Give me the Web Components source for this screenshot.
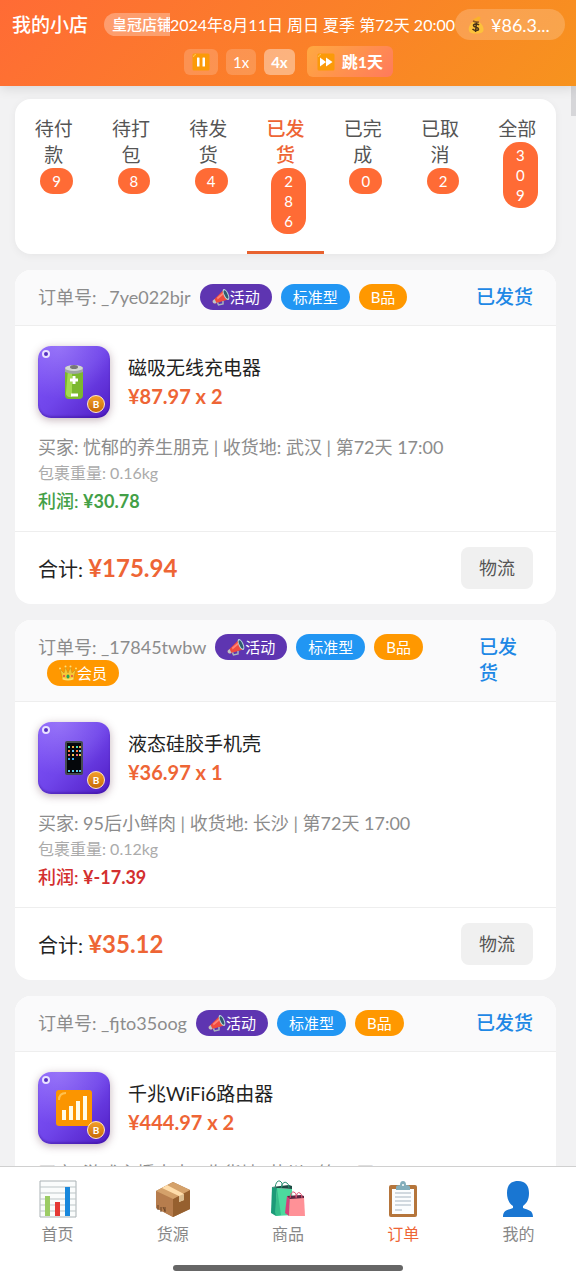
<!DOCTYPE html>
<html lang="zh-CN">
<head>
<meta charset="utf-8">
<meta name="viewport" content="width=device-width, initial-scale=1">
<title>我的小店 - 订单</title>
<style>
  :root {
    --brand: #ff6b35;
    --brand-end: #f7931e;
    --page: #f2f2f3;
    --card: #ffffff;
    --card-head: #fafafb;
    --line: #eeeeee;
    --ink: #222222;
    --muted: #8c8c8c;
    --faint: #ababab;
    --price: #ee6535;
    --blue: #2196f3;
    --purple: #5e35b1;
    --orange: #ff9800;
    --status: #1e88e5;
    --profit: #43a047;
    --loss: #d32f2f;
  }

  body {
    margin: 0;
    background: var(--page);
    color: var(--ink);
    font-family: Lato, "Noto Sans CJK SC", sans-serif;
    font-size: 18px;
    line-height: 26px;
  }
</style>
</head>
<body>
<shop-app>
  <shop-header slot="header" shop="我的小店" level="皇冠店铺" date="2024年8月11日 周日 夏季 第72天 20:00" money="¥86.3..."></shop-header>

  <order-tabs>
    <order-tab count="9">待付款</order-tab>
    <order-tab count="8">待打包</order-tab>
    <order-tab count="4">待发货</order-tab>
    <order-tab count="286" active>已发货</order-tab>
    <order-tab count="0">已完成</order-tab>
    <order-tab count="2">已取消</order-tab>
    <order-tab count="309">全部</order-tab>
  </order-tabs>

  <order-card number="_7ye022bjr" status="已发货" product="磁吸无线充电器" icon="battery" price="¥87.97 x 2"
    buyer="买家: 忧郁的养生朋克 | 收货地: 武汉 | 第72天 17:00" weight="包裹重量: 0.16kg" profit="¥30.78" total="¥175.94">
    <order-tag slot="tags" kind="event"><emoji-icon name="megaphone"></emoji-icon>活动</order-tag>
    <order-tag slot="tags">标准型</order-tag>
    <order-tag slot="tags" kind="grade">B品</order-tag>
  </order-card>

  <order-card number="_17845twbw" status="已发货" product="液态硅胶手机壳" icon="phone" price="¥36.97 x 1"
    buyer="买家: 95后小鲜肉 | 收货地: 长沙 | 第72天 17:00" weight="包裹重量: 0.12kg" profit="¥-17.39" total="¥35.12">
    <order-tag slot="tags" kind="event"><emoji-icon name="megaphone"></emoji-icon>活动</order-tag>
    <order-tag slot="tags">标准型</order-tag>
    <order-tag slot="tags" kind="grade">B品</order-tag>
    <order-tag slot="tags" kind="grade"><emoji-icon name="crown"></emoji-icon>会员</order-tag>
  </order-card>

  <order-card number="_fjto35oog" status="已发货" product="千兆WiFi6路由器" icon="signal" price="¥444.97 x 2"
    buyer="买家: 游戏主播大大 | 收货地: 苏州 | 第72天 17:00" weight="包裹重量: 0.45kg" profit="¥120.50" total="¥889.94">
    <order-tag slot="tags" kind="event"><emoji-icon name="megaphone"></emoji-icon>活动</order-tag>
    <order-tag slot="tags">标准型</order-tag>
    <order-tag slot="tags" kind="grade">B品</order-tag>
  </order-card>

  <shop-nav slot="nav">
    <nav-item icon="chart" href="#home">首页</nav-item>
    <nav-item icon="package" href="#supply">货源</nav-item>
    <nav-item icon="bags" href="#goods">商品</nav-item>
    <nav-item icon="clipboard" href="#orders" active>订单</nav-item>
    <nav-item icon="user" href="#me">我的</nav-item>
  </shop-nav>
</shop-app>

<script>
/* Emoji drawings, all on a 36x36 grid. */
const ICONS = {
  pause: `
    <rect x="1" y="1" width="34" height="34" rx="3" fill="#fb9a08"/>
    <path d="M3 8Q3 3 8 3" stroke="#ffc557" stroke-width="2" fill="none"/>
    <rect x="10" y="9" width="5" height="18" rx="1" fill="#fff"/>
    <rect x="21" y="9" width="5" height="18" rx="1" fill="#fff"/>`,
  forward: `
    <rect x="1" y="1" width="34" height="34" rx="3" fill="#fb9a08"/>
    <path d="M3 8Q3 3 8 3" stroke="#ffc557" stroke-width="2" fill="none"/>
    <path d="M6 9l12 9-12 9zM18 9l13 9-13 9z" fill="#fff"/>`,
  moneybag: `
    <path d="M13 10C6 16 2 23 4 30c1 4 6 5 14 5s14-1 15-6c1-8-4-14-10-18z" fill="#fdc13b"/>
    <path d="M12 9C13 4 19 5 21 2c2-2 7 0 6 3-1 2-4 3-5 6z" fill="#fbb22a"/>
    <path d="M12 10q6 3 12 2" stroke="#8f5b24" stroke-width="3" fill="none"/>
    <path d="M24 18c-3-3-11-3-11 1 0 5 10 2 10 7 0 4-8 4-12 0M19 13l-2 19" stroke="#493316" stroke-width="3" fill="none"/>`,
  megaphone: `
    <path d="M2 25L23 4l9 19L6 31c-4 0-6-3-4-6z" fill="#ef4b3f"/>
    <path d="M2 25l3-3 4 8-3 1c-4 0-6-3-4-6z" fill="#b9c6cc"/>
    <path d="M11 29l2 5 9-2v-6" fill="none" stroke="#a8b5bb" stroke-width="3"/>
    <ellipse cx="28" cy="13" rx="5" ry="12" transform="rotate(-24 28 13)" fill="#b8d5dd"/>
    <ellipse cx="28" cy="13" rx="3" ry="9" transform="rotate(-24 28 13)" fill="#315b70"/>
    <path d="M10 19l12-10 1 4-12 10z" fill="#ff8474"/>`,
  crown: `
    <path d="M2 10l8 8 3-12 5 12 5-12 3 12 8-8-5 20q-11 5-22 0z" fill="#f8c737" stroke="#ba881a" stroke-width="1"/>
    <path d="M7 27q11 5 22 0v4q-11 4-22 0z" fill="#ffe16b"/>
    <circle cx="2" cy="9" r="2" fill="#ffe07a"/><circle cx="13" cy="5" r="2" fill="#ffe07a"/>
    <circle cx="23" cy="5" r="2" fill="#ffe07a"/><circle cx="34" cy="9" r="2" fill="#ffe07a"/>
    <ellipse cx="18" cy="25" rx="3" ry="4" fill="#22a45a"/>
    <circle cx="10" cy="24" r="2" fill="#e34848"/><circle cx="26" cy="24" r="2" fill="#e34848"/>`,
  battery: `
    <rect x="9" y="2" width="18" height="33" rx="4" fill="#7cb82f"/>
    <path d="M12 5h4v28h-3q-3-1-3-4z" fill="#a5db50"/>
    <path d="M9 5v3q9 4 18 0V5z" fill="#9fa5a3"/>
    <ellipse cx="18" cy="4" rx="9" ry="3" fill="#d4d7d6"/>
    <ellipse cx="18" cy="3" rx="4" ry="2" fill="#777"/>
    <path d="M18 12v8M14 16h8" stroke="#fff" stroke-width="3"/>
    <path d="M15 31h7" stroke="#fff" stroke-width="3"/>`,
  phone: `
    <rect x="9" y="1" width="18" height="34" rx="2" fill="#454b50"/>
    <rect x="11" y="3" width="14" height="30" fill="#05070b"/>
    <path d="M12 7h2M20 7h2" stroke="#4de0b4" stroke-width="2"/><path d="M16 7h2M23 7h2" stroke="#f6a63b" stroke-width="2"/>
    <path d="M12 11h2M20 11h2" stroke="#ff793e" stroke-width="2"/><path d="M16 11h2M23 11h2" stroke="#72c9f6" stroke-width="2"/>
    <path d="M12 15h2M20 15h2" stroke="#ec627b" stroke-width="2"/><path d="M16 15h2M23 15h2" stroke="#efc34a" stroke-width="2"/>
    <path d="M12 19h2M16 19h2" stroke="#3ba7ee" stroke-width="2"/>
    <path d="M12 31h2M16 31h2M20 31h2M23 31h2" stroke="#56ccec" stroke-width="2"/>`,
  signal: `
    <rect x="0" y="0" width="36" height="36" rx="3" fill="#fb9500"/>
    <path d="M3 10Q3 3 10 3" stroke="#ffc14f" stroke-width="2" fill="none"/>
    <path d="M8 30V20M15 30V16M22 30V11M29 30V6" stroke="#fffbe8" stroke-width="4"/>`,
  chart: `
    <path d="M0 0h36v36H0z" fill="#fafcfc" stroke="#aab2b5" stroke-width="1"/>
    <path d="M0 6h36M0 12h36M0 18h36M0 24h36M0 30h36" stroke="#bcc5c7"/>
    <path d="M5 15h5v20H5z" fill="#9ccc65"/><path d="M15 21h5v14h-5z" fill="#e53935"/>
    <path d="M25 6h5v29h-5z" fill="#1988dc"/>`,
  package: `
    <path d="M1 10L18 1l17 8v19L18 36 1 27z" fill="#ad7546"/>
    <path d="M1 10l17 8v18L1 27z" fill="#b77d4d"/><path d="M18 18l17-9v19l-17 8z" fill="#96602f"/>
    <path d="M1 10L18 1l17 8-17 9z" fill="#d4a16a"/>
    <path d="M7 7l5-3 17 9v6l-5 2v-6z" fill="#ffddab"/><path d="M24 15l5-2v6l-5 2z" fill="#dbbd91"/>
    <path d="M3 24v5m3-3v5m2-5l2 4m0-4v5" stroke="#6b4526" fill="none"/>`,
  bags: `
    <path d="M2 6l5 1-1 28-5-3z" fill="#1c9a78"/>
    <path d="M7 7l15 1 1 26-17 1z" fill="#4cda9e"/>
    <path d="M7 7l-2 24 1 4 5-1z" fill="#36bd8a"/>
    <path d="M2 6l17-2 3 1v3L7 7z" fill="#1c4a42"/>
    <path d="M5 7q1-8 5-7 3 1 2 6M11 7q2-8 6-5 2 1 2 5" fill="none" stroke="#2a8f72" stroke-width="1"/>
    <path d="M17 15l3 1-1 19-4-3z" fill="#d6407a"/>
    <path d="M20 16h14l1 19H19z" fill="#ff9197"/>
    <path d="M17 15l14-1 3 1v2l-14 1z" fill="#5c2440"/>
    <path d="M20 17q1-7 4-6 3 1 2 5M26 17q1-7 4-5 2 1 2 5" fill="none" stroke="#df5372" stroke-width="1"/>`,
  clipboard: `
    <rect x="4" y="4" width="28" height="32" rx="2" fill="#b5753b"/>
    <path d="M7 8h22v25H7z" fill="#fbfdfe"/>
    <path d="M10 12h16M10 16h16M10 20h16M10 24h16M10 29h7" stroke="#a7b5c0"/>
    <path d="M11 9V6q0-2 4-2 0-4 3-4t3 4q4 0 4 2v3z" fill="#83aebb"/><circle cx="18" cy="4" r="1" fill="#fff"/>`,
  user: `
    <path d="M18 0C10 0 7 5 7 12c0 6 2 10 6 13v2c-5 2-10 2-10 9h30c0-7-5-7-10-9v-2c4-3 6-7 6-13 0-7-3-12-11-12z" fill="#1976d2"/>`
};

class EmojiIcon extends HTMLElement {
  connectedCallback() {
    if (this.shadowRoot) return;
    const root = this.attachShadow({ mode: "open" });
    root.innerHTML = `
      <style>
        :host { display: inline-block; width: 18px; height: 18px; vertical-align: -3px; }
        svg { display: block; width: 100%; height: 100%; overflow: visible; }
      </style>
      <svg viewBox="0 0 36 36" aria-hidden="true">${ICONS[this.getAttribute("name")] || ""}</svg>
    `;
  }
}
customElements.define("emoji-icon", EmojiIcon);

/* Page frame: fixed header and nav, scrolling list between them. */
class ShopApp extends HTMLElement {
  connectedCallback() {
    if (this.shadowRoot) return;
    const root = this.attachShadow({ mode: "open" });
    root.innerHTML = `
      <style>
        :host { display: flex; flex-direction: column; height: 100vh; }
        .view { position: relative; flex: 1; min-height: 0; }
        main {
          box-sizing: border-box;
          height: 100%;
          overflow-y: auto;
          scrollbar-width: none;
          display: flex;
          flex-direction: column;
          gap: 16px;
          padding: 13px 20px 16px 15px;
        }
        main ::slotted(*) { flex: none; }
        .thumb {
          position: absolute;
          top: 0;
          right: 0;
          width: 5px;
          height: 30px;
          background: #d6d6d9;
        }
      </style>
      <slot name="header"></slot>
      <div class="view">
        <main><slot></slot></main>
        <div class="thumb"></div>
      </div>
      <slot name="nav"></slot>
    `;
  }
}
customElements.define("shop-app", ShopApp);

class ShopHeader extends HTMLElement {
  connectedCallback() {
    if (this.shadowRoot) return;
    const root = this.attachShadow({ mode: "open" });
    root.innerHTML = `
      <style>
        :host {
          display: block;
          position: relative;
          z-index: 1;
          padding: 9px 11px 9px 12px;
          background: linear-gradient(135deg, var(--brand), var(--brand-end));
          box-shadow: 0 2px 12px rgba(0, 0, 0, 0.12);
          color: #fff;
        }
        .top { display: flex; align-items: center; height: 31px; white-space: nowrap; }
        .shop { display: flex; flex: 1; align-items: center; gap: 16px; min-width: 0; overflow: hidden; }
        h1 { margin: 0; font-size: 19px; font-weight: 500; }
        .level {
          flex: none;
          padding: 0 8px;
          border-radius: 12px;
          background: rgba(255, 255, 255, 0.3);
          font-size: 15px;
          font-weight: 500;
          line-height: 23px;
        }
        .date { font-size: 16px; }
        .money {
          display: flex;
          align-items: center;
          gap: 6px;
          box-sizing: border-box;
          width: 110px;
          height: 31px;
          padding: 0 12px;
          border-radius: 16px;
          background: rgba(255, 255, 255, 0.2);
          font-size: 18px;
        }
        .speed { display: flex; justify-content: center; align-items: center; gap: 8px; margin-top: 6px; }
        button {
          display: flex;
          align-items: center;
          height: 26px;
          padding: 0 7px;
          border: 0;
          border-radius: 6px;
          background: rgba(255, 255, 255, 0.18);
          color: #fff;
          font: inherit;
          font-size: 15px;
          line-height: 26px;
        }
        button.pause { padding: 0 8px; }
        button.on { background: rgba(255, 255, 255, 0.4); font-weight: 700; }
        button.jump {
          gap: 7px;
          height: 31px;
          margin-left: 4px;
          padding: 0 10px;
          background: linear-gradient(135deg, #ffa940, #ff7a5c);
          font-size: 16px;
          font-weight: 700;
        }
      </style>
      <div class="top">
        <div class="shop">
          <h1>${this.getAttribute("shop")}</h1>
          <span class="level">${this.getAttribute("level")}</span>
        </div>
        <span class="date">${this.getAttribute("date")}</span>
        <span class="money"><emoji-icon name="moneybag"></emoji-icon>${this.getAttribute("money")}</span>
      </div>
      <div class="speed">
        <button class="pause" aria-label="暂停"><emoji-icon name="pause"></emoji-icon></button>
        <button>1x</button>
        <button class="on">4x</button>
        <button class="jump"><emoji-icon name="forward"></emoji-icon>跳1天</button>
      </div>
    `;
  }
}
customElements.define("shop-header", ShopHeader);

class OrderTabs extends HTMLElement {
  connectedCallback() {
    if (this.shadowRoot) return;
    const root = this.attachShadow({ mode: "open" });
    root.innerHTML = `
      <style>
        :host {
          display: flex;
          overflow: hidden;
          border-radius: 16px;
          background: var(--card);
          box-shadow: 0 2px 8px rgba(0, 0, 0, 0.05);
        }
      </style>
      <slot></slot>
    `;
  }
}
customElements.define("order-tabs", OrderTabs);

class OrderTab extends HTMLElement {
  connectedCallback() {
    if (this.shadowRoot) return;
    const root = this.attachShadow({ mode: "open" });
    root.innerHTML = `
      <style>
        :host { display: flex; flex: 1; min-width: 0; }
        button {
          display: flex;
          flex: 1;
          flex-direction: column;
          align-items: center;
          min-width: 0;
          padding: 17px 18px;
          border: 0;
          border-bottom: 3px solid transparent;
          background: none;
          color: #555;
          font: inherit;
          font-size: 19px;
          line-height: 26px;
        }
        :host([active]) button { border-color: #e8622f; color: var(--price); font-weight: 500; }
        .count {
          box-sizing: border-box;
          max-width: 35px;
          margin-left: 6px;
          padding: 3px 12px;
          border-radius: 16px;
          background: var(--brand);
          color: #fff;
          font-size: 15px;
          font-weight: 400;
          line-height: 20px;
          word-break: break-all;
        }
      </style>
      <button><span><slot></slot></span><span class="count">${this.getAttribute("count")}</span></button>
    `;
  }
}
customElements.define("order-tab", OrderTab);

class OrderTag extends HTMLElement {
  connectedCallback() {
    if (this.shadowRoot) return;
    const root = this.attachShadow({ mode: "open" });
    root.innerHTML = `
      <style>
        :host {
          display: inline-block;
          margin-left: 9px;
          padding: 0 12px;
          border-radius: 13px;
          background: var(--blue);
          color: #fff;
          font-size: 15px;
          line-height: 26px;
          vertical-align: top;
          white-space: nowrap;
        }
        :host([kind="event"]) { background: var(--purple); }
        :host([kind="grade"]) { background: var(--orange); }
      </style>
      <slot></slot>
    `;
  }
}
customElements.define("order-tag", OrderTag);

/* Purple tile with the product's emoji and its grade medal. */
class ProductTile extends HTMLElement {
  connectedCallback() {
    if (this.shadowRoot) return;
    const root = this.attachShadow({ mode: "open" });
    root.innerHTML = `
      <style>
        :host {
          position: relative;
          display: grid;
          place-items: center;
          flex: none;
          width: 72px;
          height: 72px;
          border-radius: 13px;
          background:
            radial-gradient(circle at 30% 0, rgba(255, 255, 255, 0.2), transparent 60%),
            linear-gradient(135deg, #8155fb 0%, #7045ea 50%, #4f1cc4 100%);
          box-shadow: 0 2px 8px rgba(90, 40, 60, 0.35), inset 0 -2px 2px rgba(40, 0, 120, 0.3);
        }
        emoji-icon { width: 36px; height: 36px; }
        .dot {
          position: absolute;
          top: 4px;
          left: 4px;
          width: 4px;
          height: 4px;
          border: 2px solid #e9e2ff;
          border-radius: 50%;
          background: #5530c0;
        }
        .medal {
          position: absolute;
          right: 5px;
          bottom: 5px;
          width: 16px;
          height: 16px;
          border: 1px solid #ffe8cc;
          border-radius: 50%;
          background: linear-gradient(#f2a02a, #c86a06);
          color: #fff;
          font-size: 10px;
          font-weight: 700;
          line-height: 16px;
          text-align: center;
        }
      </style>
      <span class="dot"></span>
      <emoji-icon name="${this.getAttribute("icon")}"></emoji-icon>
      <span class="medal">B</span>
    `;
  }
}
customElements.define("product-tile", ProductTile);

class OrderCard extends HTMLElement {
  connectedCallback() {
    if (this.shadowRoot) return;
    const get = (name) => this.getAttribute(name) || "";
    const root = this.attachShadow({ mode: "open" });
    root.innerHTML = `
      <style>
        :host {
          display: block;
          overflow: hidden;
          border-radius: 16px;
          background: var(--card);
        }
        header {
          display: flex;
          justify-content: space-between;
          padding: 14px 23px 15px;
          border-bottom: 1px solid var(--line);
          background: var(--card-head);
        }
        .number { color: var(--muted); }
        .status { color: var(--status); font-size: 19px; font-weight: 500; }
        section { padding: 20px 23px 17px; }
        .product { display: flex; align-items: center; gap: 18px; margin-bottom: 16px; }
        h2 { margin: 0; font-size: 19px; font-weight: 400; line-height: 28px; }
        .price { color: var(--price); font-size: 20px; font-weight: 700; line-height: 28px; }
        p { margin: 0; }
        .buyer { color: var(--muted); }
        .weight { color: var(--faint); font-size: 16px; }
        .profit { margin-top: 2px; color: var(--profit); font-weight: 500; }
        .profit.loss { color: var(--loss); }
        .profit b { font-weight: 700; }
        footer {
          display: flex;
          justify-content: space-between;
          align-items: center;
          padding: 15px 23px;
          border-top: 1px solid var(--line);
          font-size: 20px;
        }
        .total { color: var(--price); font-size: 24px; font-weight: 700; }
        button {
          height: 42px;
          padding: 0 18px;
          border: 0;
          border-radius: 8px;
          background: #f0f0f0;
          color: #555;
          font: inherit;
          font-size: 18px;
        }
      </style>
      <header>
        <div><span class="number">订单号: ${get("number")}</span><slot name="tags"></slot></div>
        <span class="status">${get("status")}</span>
      </header>
      <section>
        <div class="product">
          <product-tile icon="${get("icon")}"></product-tile>
          <div>
            <h2>${get("product")}</h2>
            <div class="price">${get("price")}</div>
          </div>
        </div>
        <p class="buyer">${get("buyer")}</p>
        <p class="weight">${get("weight")}</p>
        <p class="profit ${get("profit").includes("-") ? "loss" : ""}">利润: <b>${get("profit")}</b></p>
      </section>
      <footer>
        <span>合计: <span class="total">${get("total")}</span></span>
        <button>物流</button>
      </footer>
    `;
  }
}
customElements.define("order-card", OrderCard);

class ShopNav extends HTMLElement {
  connectedCallback() {
    if (this.shadowRoot) return;
    const root = this.attachShadow({ mode: "open" });
    root.innerHTML = `
      <style>
        :host { display: block; position: relative; padding-bottom: 9px; border-top: 1px solid #d0d0d0; background: #fff; }
        nav { display: flex; padding: 14px 0 18px; }
        .handle { width: 40%; height: 6px; margin: 0 auto; border-radius: 3px; background: #666; }
      </style>
      <nav><slot></slot></nav>
      <div class="handle"></div>
    `;
  }
}
customElements.define("shop-nav", ShopNav);

class NavItem extends HTMLElement {
  connectedCallback() {
    if (this.shadowRoot) return;
    const root = this.attachShadow({ mode: "open" });
    root.innerHTML = `
      <style>
        :host { display: block; flex: 1; }
        a {
          display: flex;
          flex-direction: column;
          align-items: center;
          gap: 4px;
          color: #888;
          font-size: 16px;
          text-decoration: none;
        }
        :host([active]) a { color: var(--price); }
        emoji-icon { width: 36px; height: 36px; }
      </style>
      <a href="${this.getAttribute("href")}"><emoji-icon name="${this.getAttribute("icon")}"></emoji-icon><span><slot></slot></span></a>
    `;
  }
}
customElements.define("nav-item", NavItem);
</script>
</body>
</html>
